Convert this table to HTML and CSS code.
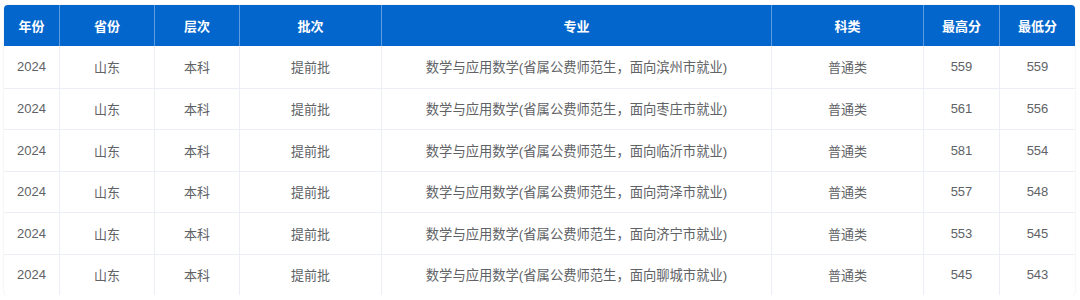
FILE: index.html
```html
<!DOCTYPE html>
<html lang="zh">
<head>
<meta charset="utf-8">
<link rel="stylesheet" href="styles.css">
</head>
<body>
<div class="wrap">
<table class="score">
<colgroup>
<col style="width:56px"><col style="width:95px"><col style="width:85px"><col style="width:142px"><col style="width:390px"><col style="width:152px"><col style="width:76px"><col style="width:75px">
</colgroup>
<thead>
<tr><th>年份</th><th>省份</th><th>层次</th><th>批次</th><th>专业</th><th>科类</th><th>最高分</th><th>最低分</th></tr>
</thead>
<tbody>
<tr><td>2024</td><td>山东</td><td>本科</td><td>提前批</td><td>数学与应用数学(省属公费师范生，面向滨州市就业)</td><td>普通类</td><td>559</td><td>559</td></tr>
<tr><td>2024</td><td>山东</td><td>本科</td><td>提前批</td><td>数学与应用数学(省属公费师范生，面向枣庄市就业)</td><td>普通类</td><td>561</td><td>556</td></tr>
<tr><td>2024</td><td>山东</td><td>本科</td><td>提前批</td><td>数学与应用数学(省属公费师范生，面向临沂市就业)</td><td>普通类</td><td>581</td><td>554</td></tr>
<tr><td>2024</td><td>山东</td><td>本科</td><td>提前批</td><td>数学与应用数学(省属公费师范生，面向菏泽市就业)</td><td>普通类</td><td>557</td><td>548</td></tr>
<tr><td>2024</td><td>山东</td><td>本科</td><td>提前批</td><td>数学与应用数学(省属公费师范生，面向济宁市就业)</td><td>普通类</td><td>553</td><td>545</td></tr>
<tr><td>2024</td><td>山东</td><td>本科</td><td>提前批</td><td>数学与应用数学(省属公费师范生，面向聊城市就业)</td><td>普通类</td><td>545</td><td>543</td></tr>
</tbody>
</table>
</div>
</body>
</html>
```
FILE: styles.css
```css
html, body {
  margin: 0;
  padding: 0;
  background: #ffffff;
}
body {
  font-family: "Liberation Sans", "Noto Sans CJK SC", sans-serif;
}
.wrap {
  padding: 5px 0 0 4px;
}
.score {
  border-collapse: separate;
  border-spacing: 0;
  table-layout: fixed;
  width: 1071px;
  border-radius: 4px;
  overflow: hidden;
  box-shadow: 0 0 2px rgba(0, 0, 0, 0.12);
  font-size: 13px;
}
.score th {
  background: #0366cc;
  color: #ffffff;
  font-weight: bold;
  height: 41px;
  padding: 0;
  text-align: center;
  border-right: 1px solid #5d9be0;
}
.score th:last-child,
.score td:last-child {
  border-right: none;
}
.score td {
  box-sizing: border-box;
  height: 41.5px;
  padding: 0;
  text-align: center;
  color: #606266;
  border-right: 1px solid #ebeef5;
  border-top: 1px solid #ebeef5;
  white-space: nowrap;
}
.score td.major,
.score td:nth-child(5) {
  font-size: 13.3px;
}
.score tbody tr:first-child td {
  border-top: none;
}
```
